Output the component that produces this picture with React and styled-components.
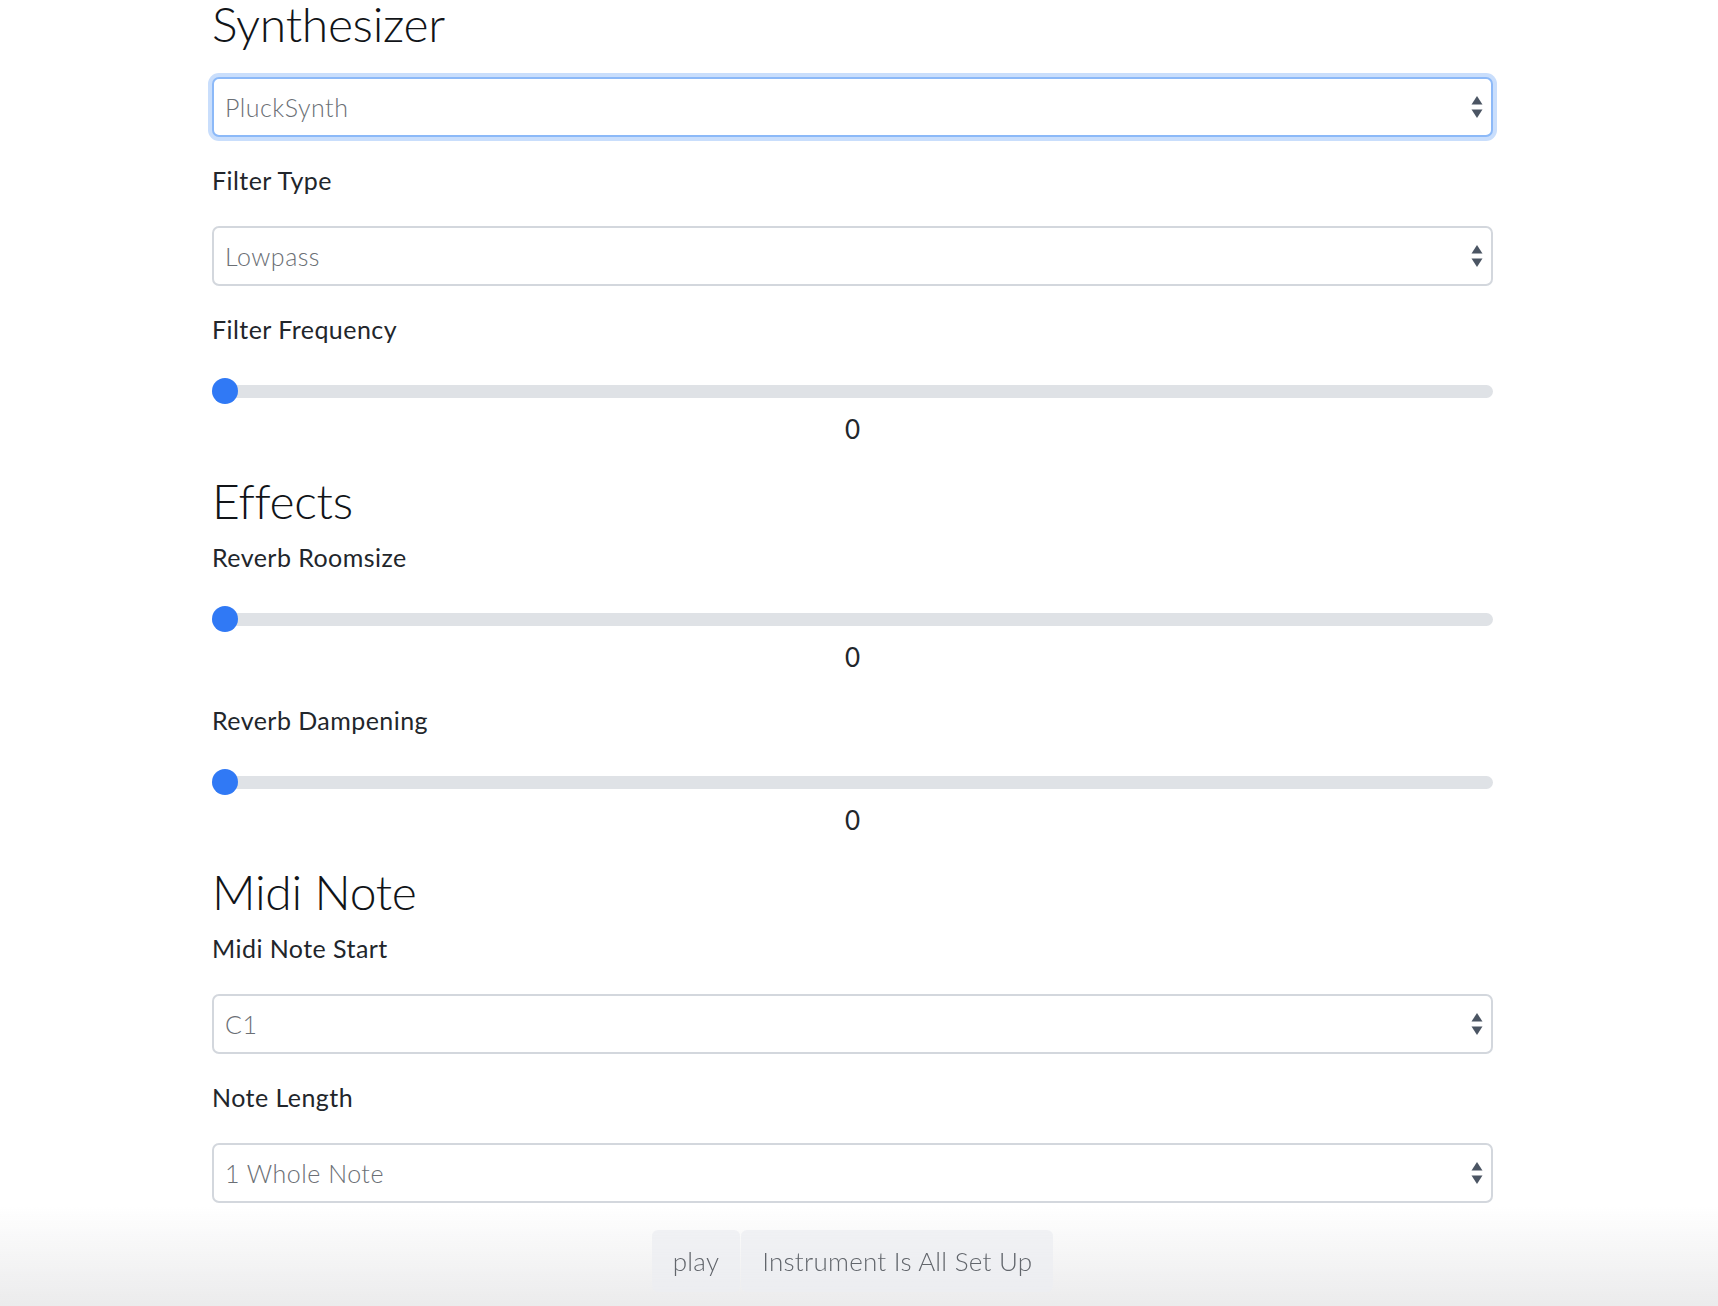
import React from "react";
import styled, { createGlobalStyle } from "styled-components";

const GlobalStyle = createGlobalStyle`
  html, body {
    margin: 0;
    padding: 0;
    background: #ffffff;
    font-family: "Lato", "Liberation Sans", sans-serif;
    color: #1f2937;
  }
  body {
    padding-right: 13px;
  }
`;

const SYNTHS = ["PluckSynth", "AMSynth", "FMSynth", "MembraneSynth", "MetalSynth"];
const FILTERS = ["Lowpass", "Highpass", "Bandpass"];
const NOTES = ["C1", "D1", "E1", "F1", "G1", "A1", "B1"];
const LENGTHS = ["1 Whole Note", "1/2 Half Note", "1/4 Quarter Note", "1/8 Eighth Note"];

function Select({ options, focused }) {
  return (
    <SelectWrap>
      <NativeSelect $focused={focused} defaultValue={options[0]}>
        {options.map((o) => (
          <option key={o}>{o}</option>
        ))}
      </NativeSelect>
      <Arrows width="12" height="24" viewBox="0 0 12 24">
        <path d="M6 1 L11.5 9.5 L0.5 9.5 Z" fill="#4b5563" />
        <path d="M0.5 14.5 L11.5 14.5 L6 23 Z" fill="#4b5563" />
      </Arrows>
    </SelectWrap>
  );
}

function Slider({ label, value }) {
  return (
    <Field>
      <Label>{label}</Label>
      <Range type="range" min="0" max="100" defaultValue={value} />
      <Value>{value}</Value>
    </Field>
  );
}

export default function App() {
  return (
    <>
      <GlobalStyle />
      <Container>
        <Heading>Synthesizer</Heading>
        <Select options={SYNTHS} focused />
        <Field>
          <Label>Filter Type</Label>
          <Select options={FILTERS} />
        </Field>
        <Slider label="Filter Frequency" value={0} />

        <Heading>Effects</Heading>
        <Slider label="Reverb Roomsize" value={0} />
        <Slider label="Reverb Dampening" value={0} />

        <Heading>Midi Note</Heading>
        <Field>
          <Label>Midi Note Start</Label>
          <Select options={NOTES} />
        </Field>
        <Field>
          <Label>Note Length</Label>
          <Select options={LENGTHS} />
        </Field>
      </Container>
      <Footer>
        <Button>play</Button>
        <Button>Instrument Is All Set Up</Button>
      </Footer>
    </>
  );
}

const Container = styled.div`
  width: 1281px;
  margin: 0 auto;
  padding-bottom: 120px;
`;

const Heading = styled.h2`
  margin: 28px 0 0;
  font-size: 48px;
  line-height: 48px;
  font-weight: 300;
  color: #111418;
  letter-spacing: -0.3px;

  &:first-child {
    margin-top: 0;
  }
`;

const Field = styled.div`
  margin-top: 27px;

  ${Heading} + & {
    margin-top: 16px;
  }
`;

const Label = styled.label`
  display: block;
  font-size: 25px;
  line-height: 32px;
  font-weight: 400;
  color: #22262b;
  letter-spacing: 0.45px;
`;

const SelectWrap = styled.div`
  position: relative;
  margin-top: 30px;

  ${Heading} + & {
    margin-top: 29px;
  }
`;

const NativeSelect = styled.select`
  appearance: none;
  -webkit-appearance: none;
  display: block;
  box-sizing: border-box;
  width: 100%;
  height: 60px;
  padding: 0 40px 0 11px;
  border: ${(p) => (p.$focused ? "2px solid #8cb9f8" : "2px solid #d3d7dd")};
  border-radius: 7px;
  background: #ffffff;
  box-shadow: ${(p) => (p.$focused ? "0 0 0 4px #c9defc" : "none")};
  font-family: "Lato", "Liberation Sans", sans-serif;
  font-size: 25px;
  font-weight: 300;
  letter-spacing: 0.5px;
  color: #6b6f75;
  outline: none;
`;

const Arrows = styled.svg`
  position: absolute;
  right: 10px;
  top: 50%;
  transform: translateY(-50%);
  pointer-events: none;
`;

const Range = styled.input`
  -webkit-appearance: none;
  appearance: none;
  display: block;
  width: 100%;
  height: 26px;
  margin: 33px 0 0;
  background: transparent;

  &::-webkit-slider-runnable-track {
    height: 13px;
    border-radius: 7px;
    background: #dfe2e6;
  }

  &::-webkit-slider-thumb {
    -webkit-appearance: none;
    width: 26px;
    height: 26px;
    margin-top: -6.5px;
    border-radius: 50%;
    background: #3079f5;
    border: none;
  }
`;

const Value = styled.div`
  margin-top: 10px;
  padding-bottom: 5px;
  text-align: center;
  font-size: 26px;
  line-height: 30px;
  font-weight: 400;
  color: #22262b;
`;

const Footer = styled.div`
  position: fixed;
  left: 0;
  right: 0;
  bottom: 0;
  height: 100px;
  box-sizing: border-box;
  padding: 24px 13px 0 0;
  display: flex;
  justify-content: center;
  align-items: flex-start;
  gap: 1px;
  background: linear-gradient(to bottom, rgba(255, 255, 255, 0), #ebebec);
`;

const Button = styled.button`
  height: 62px;
  padding: 0 21px;
  border: none;
  border-radius: 6px;
  background: rgba(236, 238, 241, 0.75);
  font-family: "Lato", "Liberation Sans", sans-serif;
  font-size: 26px;
  font-weight: 300;
  letter-spacing: 0.25px;
  color: #62666c;
  cursor: pointer;
`;
